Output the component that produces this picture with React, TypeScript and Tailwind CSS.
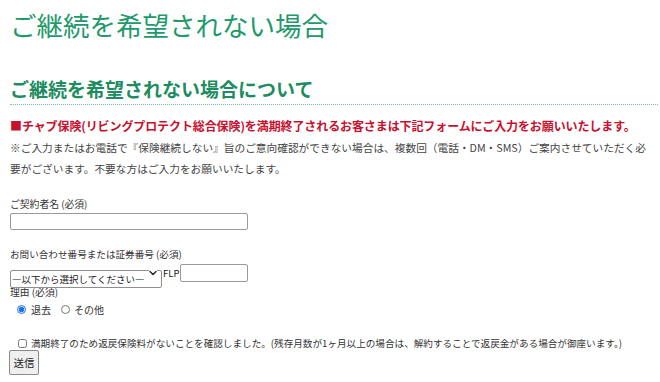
import { useState } from "react";

const jp = { fontFamily: '"Noto Sans CJK JP", "Noto Sans", sans-serif' };

export default function App() {
  const [reason, setReason] = useState("taikyo");
  const [agreed, setAgreed] = useState(false);

  return (
    <div className="w-[660px] h-[382px] overflow-hidden bg-white pl-[10px] pr-[2px] text-[#333]" style={jp}>
      {/* ページタイトル */}
      <h1 className="pt-[8px] text-[26.5px] leading-[34px] font-normal text-[#22996b]">
        ご継続を希望されない場合
      </h1>

      <h2 className="mt-[34px] pb-[2px] text-[19px] leading-[26px] font-bold text-[#1d8c60] border-b border-dotted border-[#7cc4a6]">
        ご継続を希望されない場合について
      </h2>

      <p className="mt-[12px] text-[12px] leading-[18px] font-bold text-[#c8102e] tracking-[-0.1px]">
        ■チャブ保険(リビングプロテクト総合保険)を満期終了されるお客さまは下記フォームにご入力をお願いいたします。
      </p>

      <p className="mt-[3px] text-[10.7px] leading-[20.5px] text-[#444] whitespace-nowrap">
        ※ご入力またはお電話で『保険継続しない』旨のご意向確認ができない場合は、複数回（電話・DM・SMS）ご案内させていただく必
        <br />
        要がございます。不要な方はご入力をお願いいたします。
      </p>

      {/* フォーム */}
      <form onSubmit={(e) => e.preventDefault()}>
        <label className="block mt-[18px] text-[9.8px] leading-[14px]">ご契約者名 (必須)</label>
        <input
          type="text"
          className="block mt-[2px] w-[238px] h-[17px] border border-[#9a9a9a] rounded-[2px] outline-none text-[10px] px-1"
        />

        <label className="block mt-[17px] text-[9.6px] leading-[14px]">
          お問い合わせ番号または証券番号 (必須)
        </label>
        <div className="mt-[3px] flex items-center h-[18px]">
          <div className="relative w-[152px] h-[18px]">
            <select className="appearance-none w-full h-full border border-[#8f8f8f] rounded-[2px] bg-white text-[9.5px] leading-[16px] pl-[1px] pr-3 outline-none text-[#222]">
              <option>―以下から選択してください―</option>
              <option>お問い合わせ番号</option>
              <option>証券番号</option>
            </select>
            <svg
              className="absolute right-[5px] top-[6px] pointer-events-none bg-white"
              width="8"
              height="6"
              viewBox="0 0 8 6"
              fill="none"
            >
              <path d="M1 1.5L4 4.5L7 1.5" stroke="#222" strokeWidth="1.4" strokeLinecap="round" strokeLinejoin="round" />
            </svg>
          </div>
          <span className="ml-px text-[9.5px] leading-[18px] text-[#222]">FLP</span>
          <input
            type="text"
            className="ml-px w-[68px] h-[18px] border border-[#9a9a9a] rounded-[2px] outline-none text-[10px] px-1"
          />
        </div>

        <label className="block mt-[3px] text-[9.8px] leading-[14px]">理由 (必須)</label>
        <div className="mt-[3px] flex items-center h-[14px] pl-[7px] text-[10px]">
          <label className="flex items-center">
            <input
              type="radio"
              name="reason"
              checked={reason === "taikyo"}
              onChange={() => setReason("taikyo")}
              className="m-0 w-[9px] h-[9px] accent-[#1a73e8]"
            />
            <span className="ml-[5px]">退去</span>
          </label>
          <label className="flex items-center ml-[10px]">
            <input
              type="radio"
              name="reason"
              checked={reason === "other"}
              onChange={() => setReason("other")}
              className="m-0 w-[9px] h-[9px]"
            />
            <span className="ml-[4px]">その他</span>
          </label>
        </div>

        <label className="mt-[20px] flex items-center h-[14px] pl-[8px] text-[9.6px] whitespace-nowrap">
          <input
            type="checkbox"
            checked={agreed}
            onChange={(e) => setAgreed(e.target.checked)}
            className="m-0 w-[9px] h-[9px]"
          />
          <span className="ml-[4px]">
            満期終了のため返戻保険料がないことを確認しました。(残存月数が1ヶ月以上の場合は、解約することで返戻金がある場合が御座います。)
          </span>
        </label>

        <button
          type="submit"
          className="block -ml-px w-[30px] h-[25px] border border-[#8a8a8a] rounded-[2px] bg-[#efefef] text-[10.5px] text-[#222]"
        >
          送信
        </button>
      </form>
    </div>
  );
}
